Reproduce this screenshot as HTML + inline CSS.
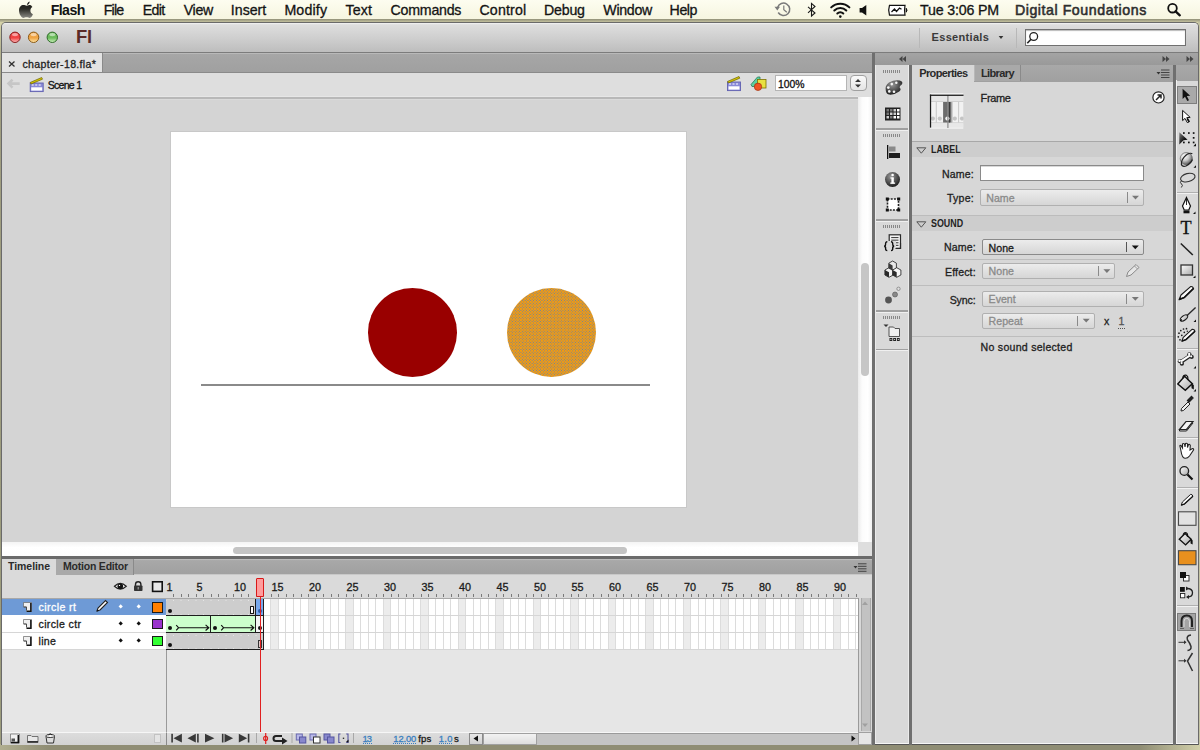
<!DOCTYPE html>
<html><head><meta charset="utf-8">
<style>
*{margin:0;padding:0;box-sizing:border-box}
html,body{width:1200px;height:750px;overflow:hidden;background:#c9c69f;font-family:"Liberation Sans",sans-serif;color:#111;position:relative}
.a{position:absolute}
.t{position:absolute;white-space:pre;line-height:0;height:0;-webkit-text-stroke-width:0.3px}
.t .bl{display:inline-block;line-height:0}
svg{position:absolute;overflow:visible}
</style></head><body>
<div class="a" style="left:0px;top:0px;width:1200px;height:750px;background:#d6d3aa"></div><div class="a" style="left:0px;top:19px;width:1.5px;height:726px;background:linear-gradient(#dad7ac,#b8b692 4%,#a09e80 10%,#9c9c7c)"></div><div class="a" style="left:1198px;top:19px;width:2px;height:726px;background:#c4c3a2"></div><div class="a" style="left:0px;top:744px;width:1200px;height:6px;background:linear-gradient(90deg,#b0ae90,#8f8d74 4%,#8f8d74 95%,#d2d0aa)"></div><div class="a" style="left:0px;top:0px;width:1200px;height:19px;background:linear-gradient(#fdfdf0,#f6f5e0)"></div><div class="a" style="left:0px;top:19px;width:1200px;height:3px;background:linear-gradient(#8f8e76,#c4c19f)"></div><div class="t" style="left:50.8px;top:10.0px;font-size:14.2px;font-weight:bold;color:#141414;letter-spacing:-0.64px;-webkit-text-stroke-width:0;"><span class="bl">Flash</span></div><div class="t" style="left:103.7px;top:10.0px;font-size:14.2px;font-weight:normal;color:#141414;letter-spacing:-0.79px;"><span class="bl">File</span></div><div class="t" style="left:142.8px;top:10.0px;font-size:14.2px;font-weight:normal;color:#141414;letter-spacing:-0.65px;"><span class="bl">Edit</span></div><div class="t" style="left:183.7px;top:10.0px;font-size:14.2px;font-weight:normal;color:#141414;letter-spacing:-0.30px;"><span class="bl">View</span></div><div class="t" style="left:230.8px;top:10.0px;font-size:14.2px;font-weight:normal;color:#141414;letter-spacing:0.00px;"><span class="bl">Insert</span></div><div class="t" style="left:284.4px;top:10.0px;font-size:14.2px;font-weight:normal;color:#141414;letter-spacing:0.16px;"><span class="bl">Modify</span></div><div class="t" style="left:345.4px;top:10.0px;font-size:14.2px;font-weight:normal;color:#141414;letter-spacing:0.16px;"><span class="bl">Text</span></div><div class="t" style="left:390.6px;top:10.0px;font-size:14.2px;font-weight:normal;color:#141414;letter-spacing:-0.24px;"><span class="bl">Commands</span></div><div class="t" style="left:479.4px;top:10.0px;font-size:14.2px;font-weight:normal;color:#141414;letter-spacing:0.19px;"><span class="bl">Control</span></div><div class="t" style="left:544.0px;top:10.0px;font-size:14.2px;font-weight:normal;color:#141414;letter-spacing:-0.20px;"><span class="bl">Debug</span></div><div class="t" style="left:603.3px;top:10.0px;font-size:14.2px;font-weight:normal;color:#141414;letter-spacing:-0.29px;"><span class="bl">Window</span></div><div class="t" style="left:669.6px;top:10.0px;font-size:14.2px;font-weight:normal;color:#141414;letter-spacing:-0.43px;"><span class="bl">Help</span></div><div class="t" style="left:920.0px;top:10.0px;font-size:14.2px;font-weight:normal;color:#141414;letter-spacing:-0.17px;"><span class="bl">Tue 3:06 PM</span></div><div class="t" style="left:1014.9px;top:10.0px;font-size:14.2px;font-weight:normal;color:#2e2e2e;letter-spacing:0.55px;-webkit-text-stroke-width:0.55px"><span class="bl">Digital Foundations</span></div><div class="a" style="left:1px;top:22px;width:1198px;height:723px;background:#d6d6d6;border:1px solid #6a6a6a;border-bottom-color:#555;border-radius:5px 5px 0 0"></div><div class="a" style="left:2px;top:23px;width:1196px;height:30px;background:linear-gradient(#f4f4f4,#dedede 6%,#cdcdcd 55%,#bcbcbc);border-radius:4px 4px 0 0"></div><div class="a" style="left:2px;top:52px;width:1196px;height:1px;background:#7c7c7c"></div><div class="t" style="left:75.8px;top:36.7px;font-size:19px;font-weight:bold;color:#5b2b27;letter-spacing:0.00px;-webkit-text-stroke-width:0;transform:scaleX(0.97);transform-origin:0 0;letter-spacing:-0.3px"><span class="bl">Fl</span></div><svg style="left:0;top:0" width="1" height="1"><defs><linearGradient id="tl0" x1="0" y1="0" x2="0" y2="1"><stop offset="0" stop-color="#f04444"/><stop offset="0.55" stop-color="#f04444"/><stop offset="1" stop-color="#ffc0c0"/></linearGradient><linearGradient id="tl1" x1="0" y1="0" x2="0" y2="1"><stop offset="0" stop-color="#f0a444"/><stop offset="0.55" stop-color="#f0a444"/><stop offset="1" stop-color="#ffe8a8"/></linearGradient><linearGradient id="tl2" x1="0" y1="0" x2="0" y2="1"><stop offset="0" stop-color="#6cbc5c"/><stop offset="0.55" stop-color="#6cbc5c"/><stop offset="1" stop-color="#d0f4c0"/></linearGradient></defs><circle cx="15" cy="37.3" r="5.2" fill="url(#tl0)" stroke="#8a2020" stroke-width="1"/><ellipse cx="15" cy="34.6" rx="3" ry="1.6" fill="#fff" opacity="0.5"/><circle cx="33.6" cy="37.3" r="5.2" fill="url(#tl1)" stroke="#8a5a18" stroke-width="1"/><ellipse cx="33.6" cy="34.6" rx="3" ry="1.6" fill="#fff" opacity="0.5"/><circle cx="52.3" cy="37.3" r="5.2" fill="url(#tl2)" stroke="#2e6a28" stroke-width="1"/><ellipse cx="52.3" cy="34.6" rx="3" ry="1.6" fill="#fff" opacity="0.5"/></svg><div class="a" style="left:919px;top:28px;width:1px;height:20px;background:#b8b8b8"></div><div class="t" style="left:931.6px;top:36.8px;font-size:11px;font-weight:bold;color:#3a3a3a;letter-spacing:0.31px;-webkit-text-stroke-width:0;"><span class="bl">Essentials</span></div><div class="a" style="left:1016px;top:28px;width:1px;height:20px;background:#b8b8b8"></div><div class="a" style="left:1025px;top:29px;width:161px;height:17px;background:#fff;border:1px solid #707070;box-shadow:inset 0 1px 1px #bbb"></div><div class="a" style="left:2px;top:53px;width:870px;height:19px;background:linear-gradient(#c2c2c2,#a6a6a6 8%,#a0a0a0)"></div><div class="a" style="left:2px;top:53px;width:101px;height:19px;background:#e3e3e3;border-right:1px solid #8a8a8a"></div><div class="t" style="left:22.5px;top:63.7px;font-size:10.6px;font-weight:normal;color:#222;letter-spacing:0.32px;"><span class="bl">chapter-18.fla*</span></div><div class="a" style="left:2px;top:71.6px;width:870px;height:1.2px;background:#8a8a8a"></div><div class="a" style="left:2px;top:72.8px;width:870px;height:24.2px;background:#dedede"></div><div class="t" style="left:47.7px;top:84.8px;font-size:10.6px;font-weight:normal;color:#111;letter-spacing:-0.75px;"><span class="bl">Scene 1</span></div><div class="a" style="left:775px;top:75px;width:72px;height:16px;background:#fff;border:1px solid #b5b5b5"></div><div class="t" style="left:778.0px;top:84.7px;font-size:10.4px;font-weight:normal;color:#111;letter-spacing:0.00px;"><span class="bl">100%</span></div><div class="a" style="left:849.5px;top:75px;width:17px;height:16px;background:linear-gradient(#fafafa,#e4e4e4);border:1px solid #a0a0a0;border-radius:4px"></div><div class="a" style="left:2px;top:97px;width:856px;height:445px;background:#d4d4d4"></div><div class="a" style="left:2px;top:96px;width:856px;height:1px;background:#e6e6e6"></div><div class="a" style="left:2px;top:97px;width:856px;height:1.8px;background:#b8b8b8"></div><div class="a" style="left:2px;top:98.8px;width:856px;height:1.2px;background:#dadada"></div><div class="a" style="left:170px;top:131px;width:517px;height:377px;background:#c8c8c8"></div><div class="a" style="left:171px;top:132px;width:515px;height:375px;background:#fff"></div><div class="a" style="left:858px;top:97px;width:14px;height:445px;background:linear-gradient(90deg,#ececec,#fcfcfc 30%,#ffffff 70%,#f2f2f2)"></div><div class="a" style="left:861.4px;top:263px;width:7.5px;height:113px;background:#c6c6c6;border-radius:4px"></div><div class="a" style="left:2px;top:541.7px;width:856px;height:14.3px;background:linear-gradient(#f4f4f4,#ffffff 40%,#fdfdfd)"></div><div class="a" style="left:233.3px;top:546.7px;width:394px;height:7px;background:#c4c4c4;border-radius:4px"></div><div class="a" style="left:858px;top:541.7px;width:14px;height:14.3px;background:#dedede"></div><div class="a" style="left:2px;top:556px;width:870px;height:3px;background:#6a6a6a"></div><div class="a" style="left:2px;top:559px;width:870px;height:16px;background:linear-gradient(#c4c4c4,#a8a8a8 10%,#a0a0a0)"></div><div class="a" style="left:2px;top:558.7px;width:54.2px;height:17px;background:#dadada"></div><div class="a" style="left:56.2px;top:559px;width:78.2px;height:15.5px;background:#a9a9a9;border-right:1px solid #8a8a8a"></div><div class="t" style="left:8.1px;top:566.1px;font-size:10.5px;font-weight:bold;color:#2a2a2a;letter-spacing:-0.07px;-webkit-text-stroke-width:0;"><span class="bl">Timeline</span></div><div class="t" style="left:63.1px;top:566.1px;font-size:10.5px;font-weight:bold;color:#2a2a2a;letter-spacing:-0.22px;-webkit-text-stroke-width:0;"><span class="bl">Motion Editor</span></div><div class="a" style="left:134.4px;top:574px;width:737.6px;height:1.5px;background:#c8c8c8"></div><div class="a" style="left:2px;top:575px;width:870px;height:23px;background:#dadada"></div><div class="a" style="left:2px;top:598px;width:856px;height:134px;background:#e6e6e6"></div><div class="a" style="left:166px;top:598px;width:1px;height:134px;background:#9a9a9a"></div><div class="a" style="left:858px;top:598px;width:14px;height:134px;background:#d8d8d8;border-left:1px solid #9a9a9a"></div><div class="a" style="left:860.5px;top:598px;width:10.8px;height:133px;background:#c2c2c2;border-left:1px solid #a8a8a8;border-right:1px solid #a8a8a8"></div><div class="a" style="left:2px;top:731.5px;width:856px;height:13px;background:#d9d9d9;border-top:1px solid #f4f4f4"></div><div class="a" style="left:858px;top:731.5px;width:14px;height:13px;background:#ececec"></div><div class="a" style="left:872px;top:53px;width:3px;height:692px;background:#6f6f6f"></div><div class="a" style="left:875px;top:53px;width:323px;height:12px;background:linear-gradient(#a4a4a4,#999)"></div><div class="a" style="left:875px;top:65px;width:34px;height:679px;background:#d9d9d9"></div><div class="a" style="left:909px;top:65px;width:3px;height:680px;background:#6f6f6f"></div><div class="a" style="left:912px;top:65px;width:261px;height:679px;background:#d7d7d7"></div><div class="a" style="left:912px;top:65px;width:261px;height:16.5px;background:linear-gradient(#a8a8a8,#a0a0a0)"></div><div class="a" style="left:912px;top:65px;width:62px;height:17px;background:#d7d7d7"></div><div class="a" style="left:974px;top:65px;width:46.5px;height:16px;background:#a9a9a9;border-right:1px solid #8a8a8a;border-left:1px solid #b8b8b8"></div><div class="t" style="left:919.2px;top:73.4px;font-size:11px;font-weight:bold;color:#2a2a2a;letter-spacing:-0.62px;-webkit-text-stroke-width:0;"><span class="bl">Properties</span></div><div class="t" style="left:981.0px;top:73.4px;font-size:11px;font-weight:bold;color:#2a2a2a;letter-spacing:-0.63px;-webkit-text-stroke-width:0;"><span class="bl">Library</span></div><div class="a" style="left:1173px;top:65px;width:2.6px;height:680px;background:#6f6f6f"></div><div class="a" style="left:1175.6px;top:65px;width:22.4px;height:679px;background:#d9d9d9"></div><div class="a" style="left:1175.6px;top:65px;width:22.4px;height:15.5px;background:linear-gradient(#a8a8a8,#a0a0a0)"></div><div class="a" style="left:367.6px;top:288px;width:89.2px;height:88.8px;border-radius:50%;background:#990000"></div><div class="a" style="left:507.3px;top:288px;width:88.7px;height:88.8px;border-radius:50%;background-color:#f59b0e;background-image:radial-gradient(circle,#5f82b0 0.5px,transparent 0.9px),radial-gradient(circle,#5f82b0 0.5px,transparent 0.9px);background-size:2.8px 2.8px;background-position:0 0,1.4px 1.4px"></div><div class="a" style="left:201.4px;top:384.2px;width:448.4px;height:1.5px;background:#8a8a8a"></div><div class="a" style="left:166.2px;top:598.5px;width:692px;height:50.8px;background:#fff"></div><div class="a" style="left:172.70px;top:598.5px;width:1px;height:50.8px;background:#dcdcdc"></div><div class="a" style="left:180.20px;top:598.5px;width:1px;height:50.8px;background:#dcdcdc"></div><div class="a" style="left:187.70px;top:598.5px;width:1px;height:50.8px;background:#dcdcdc"></div><div class="a" style="left:195.20px;top:598.5px;width:1px;height:50.8px;background:#dcdcdc"></div><div class="a" style="left:196.20px;top:598.5px;width:7.5px;height:50.8px;background:#ececec"></div><div class="a" style="left:202.70px;top:598.5px;width:1px;height:50.8px;background:#dcdcdc"></div><div class="a" style="left:210.20px;top:598.5px;width:1px;height:50.8px;background:#dcdcdc"></div><div class="a" style="left:217.70px;top:598.5px;width:1px;height:50.8px;background:#dcdcdc"></div><div class="a" style="left:225.20px;top:598.5px;width:1px;height:50.8px;background:#dcdcdc"></div><div class="a" style="left:232.70px;top:598.5px;width:1px;height:50.8px;background:#dcdcdc"></div><div class="a" style="left:233.70px;top:598.5px;width:7.5px;height:50.8px;background:#ececec"></div><div class="a" style="left:240.20px;top:598.5px;width:1px;height:50.8px;background:#dcdcdc"></div><div class="a" style="left:247.70px;top:598.5px;width:1px;height:50.8px;background:#dcdcdc"></div><div class="a" style="left:255.20px;top:598.5px;width:1px;height:50.8px;background:#dcdcdc"></div><div class="a" style="left:262.70px;top:598.5px;width:1px;height:50.8px;background:#dcdcdc"></div><div class="a" style="left:270.20px;top:598.5px;width:1px;height:50.8px;background:#dcdcdc"></div><div class="a" style="left:271.20px;top:598.5px;width:7.5px;height:50.8px;background:#ececec"></div><div class="a" style="left:277.70px;top:598.5px;width:1px;height:50.8px;background:#dcdcdc"></div><div class="a" style="left:285.20px;top:598.5px;width:1px;height:50.8px;background:#dcdcdc"></div><div class="a" style="left:292.70px;top:598.5px;width:1px;height:50.8px;background:#dcdcdc"></div><div class="a" style="left:300.20px;top:598.5px;width:1px;height:50.8px;background:#dcdcdc"></div><div class="a" style="left:307.70px;top:598.5px;width:1px;height:50.8px;background:#dcdcdc"></div><div class="a" style="left:308.70px;top:598.5px;width:7.5px;height:50.8px;background:#ececec"></div><div class="a" style="left:315.20px;top:598.5px;width:1px;height:50.8px;background:#dcdcdc"></div><div class="a" style="left:322.70px;top:598.5px;width:1px;height:50.8px;background:#dcdcdc"></div><div class="a" style="left:330.20px;top:598.5px;width:1px;height:50.8px;background:#dcdcdc"></div><div class="a" style="left:337.70px;top:598.5px;width:1px;height:50.8px;background:#dcdcdc"></div><div class="a" style="left:345.20px;top:598.5px;width:1px;height:50.8px;background:#dcdcdc"></div><div class="a" style="left:346.20px;top:598.5px;width:7.5px;height:50.8px;background:#ececec"></div><div class="a" style="left:352.70px;top:598.5px;width:1px;height:50.8px;background:#dcdcdc"></div><div class="a" style="left:360.20px;top:598.5px;width:1px;height:50.8px;background:#dcdcdc"></div><div class="a" style="left:367.70px;top:598.5px;width:1px;height:50.8px;background:#dcdcdc"></div><div class="a" style="left:375.20px;top:598.5px;width:1px;height:50.8px;background:#dcdcdc"></div><div class="a" style="left:382.70px;top:598.5px;width:1px;height:50.8px;background:#dcdcdc"></div><div class="a" style="left:383.70px;top:598.5px;width:7.5px;height:50.8px;background:#ececec"></div><div class="a" style="left:390.20px;top:598.5px;width:1px;height:50.8px;background:#dcdcdc"></div><div class="a" style="left:397.70px;top:598.5px;width:1px;height:50.8px;background:#dcdcdc"></div><div class="a" style="left:405.20px;top:598.5px;width:1px;height:50.8px;background:#dcdcdc"></div><div class="a" style="left:412.70px;top:598.5px;width:1px;height:50.8px;background:#dcdcdc"></div><div class="a" style="left:420.20px;top:598.5px;width:1px;height:50.8px;background:#dcdcdc"></div><div class="a" style="left:421.20px;top:598.5px;width:7.5px;height:50.8px;background:#ececec"></div><div class="a" style="left:427.70px;top:598.5px;width:1px;height:50.8px;background:#dcdcdc"></div><div class="a" style="left:435.20px;top:598.5px;width:1px;height:50.8px;background:#dcdcdc"></div><div class="a" style="left:442.70px;top:598.5px;width:1px;height:50.8px;background:#dcdcdc"></div><div class="a" style="left:450.20px;top:598.5px;width:1px;height:50.8px;background:#dcdcdc"></div><div class="a" style="left:457.70px;top:598.5px;width:1px;height:50.8px;background:#dcdcdc"></div><div class="a" style="left:458.70px;top:598.5px;width:7.5px;height:50.8px;background:#ececec"></div><div class="a" style="left:465.20px;top:598.5px;width:1px;height:50.8px;background:#dcdcdc"></div><div class="a" style="left:472.70px;top:598.5px;width:1px;height:50.8px;background:#dcdcdc"></div><div class="a" style="left:480.20px;top:598.5px;width:1px;height:50.8px;background:#dcdcdc"></div><div class="a" style="left:487.70px;top:598.5px;width:1px;height:50.8px;background:#dcdcdc"></div><div class="a" style="left:495.20px;top:598.5px;width:1px;height:50.8px;background:#dcdcdc"></div><div class="a" style="left:496.20px;top:598.5px;width:7.5px;height:50.8px;background:#ececec"></div><div class="a" style="left:502.70px;top:598.5px;width:1px;height:50.8px;background:#dcdcdc"></div><div class="a" style="left:510.20px;top:598.5px;width:1px;height:50.8px;background:#dcdcdc"></div><div class="a" style="left:517.70px;top:598.5px;width:1px;height:50.8px;background:#dcdcdc"></div><div class="a" style="left:525.20px;top:598.5px;width:1px;height:50.8px;background:#dcdcdc"></div><div class="a" style="left:532.70px;top:598.5px;width:1px;height:50.8px;background:#dcdcdc"></div><div class="a" style="left:533.70px;top:598.5px;width:7.5px;height:50.8px;background:#ececec"></div><div class="a" style="left:540.20px;top:598.5px;width:1px;height:50.8px;background:#dcdcdc"></div><div class="a" style="left:547.70px;top:598.5px;width:1px;height:50.8px;background:#dcdcdc"></div><div class="a" style="left:555.20px;top:598.5px;width:1px;height:50.8px;background:#dcdcdc"></div><div class="a" style="left:562.70px;top:598.5px;width:1px;height:50.8px;background:#dcdcdc"></div><div class="a" style="left:570.20px;top:598.5px;width:1px;height:50.8px;background:#dcdcdc"></div><div class="a" style="left:571.20px;top:598.5px;width:7.5px;height:50.8px;background:#ececec"></div><div class="a" style="left:577.70px;top:598.5px;width:1px;height:50.8px;background:#dcdcdc"></div><div class="a" style="left:585.20px;top:598.5px;width:1px;height:50.8px;background:#dcdcdc"></div><div class="a" style="left:592.70px;top:598.5px;width:1px;height:50.8px;background:#dcdcdc"></div><div class="a" style="left:600.20px;top:598.5px;width:1px;height:50.8px;background:#dcdcdc"></div><div class="a" style="left:607.70px;top:598.5px;width:1px;height:50.8px;background:#dcdcdc"></div><div class="a" style="left:608.70px;top:598.5px;width:7.5px;height:50.8px;background:#ececec"></div><div class="a" style="left:615.20px;top:598.5px;width:1px;height:50.8px;background:#dcdcdc"></div><div class="a" style="left:622.70px;top:598.5px;width:1px;height:50.8px;background:#dcdcdc"></div><div class="a" style="left:630.20px;top:598.5px;width:1px;height:50.8px;background:#dcdcdc"></div><div class="a" style="left:637.70px;top:598.5px;width:1px;height:50.8px;background:#dcdcdc"></div><div class="a" style="left:645.20px;top:598.5px;width:1px;height:50.8px;background:#dcdcdc"></div><div class="a" style="left:646.20px;top:598.5px;width:7.5px;height:50.8px;background:#ececec"></div><div class="a" style="left:652.70px;top:598.5px;width:1px;height:50.8px;background:#dcdcdc"></div><div class="a" style="left:660.20px;top:598.5px;width:1px;height:50.8px;background:#dcdcdc"></div><div class="a" style="left:667.70px;top:598.5px;width:1px;height:50.8px;background:#dcdcdc"></div><div class="a" style="left:675.20px;top:598.5px;width:1px;height:50.8px;background:#dcdcdc"></div><div class="a" style="left:682.70px;top:598.5px;width:1px;height:50.8px;background:#dcdcdc"></div><div class="a" style="left:683.70px;top:598.5px;width:7.5px;height:50.8px;background:#ececec"></div><div class="a" style="left:690.20px;top:598.5px;width:1px;height:50.8px;background:#dcdcdc"></div><div class="a" style="left:697.70px;top:598.5px;width:1px;height:50.8px;background:#dcdcdc"></div><div class="a" style="left:705.20px;top:598.5px;width:1px;height:50.8px;background:#dcdcdc"></div><div class="a" style="left:712.70px;top:598.5px;width:1px;height:50.8px;background:#dcdcdc"></div><div class="a" style="left:720.20px;top:598.5px;width:1px;height:50.8px;background:#dcdcdc"></div><div class="a" style="left:721.20px;top:598.5px;width:7.5px;height:50.8px;background:#ececec"></div><div class="a" style="left:727.70px;top:598.5px;width:1px;height:50.8px;background:#dcdcdc"></div><div class="a" style="left:735.20px;top:598.5px;width:1px;height:50.8px;background:#dcdcdc"></div><div class="a" style="left:742.70px;top:598.5px;width:1px;height:50.8px;background:#dcdcdc"></div><div class="a" style="left:750.20px;top:598.5px;width:1px;height:50.8px;background:#dcdcdc"></div><div class="a" style="left:757.70px;top:598.5px;width:1px;height:50.8px;background:#dcdcdc"></div><div class="a" style="left:758.70px;top:598.5px;width:7.5px;height:50.8px;background:#ececec"></div><div class="a" style="left:765.20px;top:598.5px;width:1px;height:50.8px;background:#dcdcdc"></div><div class="a" style="left:772.70px;top:598.5px;width:1px;height:50.8px;background:#dcdcdc"></div><div class="a" style="left:780.20px;top:598.5px;width:1px;height:50.8px;background:#dcdcdc"></div><div class="a" style="left:787.70px;top:598.5px;width:1px;height:50.8px;background:#dcdcdc"></div><div class="a" style="left:795.20px;top:598.5px;width:1px;height:50.8px;background:#dcdcdc"></div><div class="a" style="left:796.20px;top:598.5px;width:7.5px;height:50.8px;background:#ececec"></div><div class="a" style="left:802.70px;top:598.5px;width:1px;height:50.8px;background:#dcdcdc"></div><div class="a" style="left:810.20px;top:598.5px;width:1px;height:50.8px;background:#dcdcdc"></div><div class="a" style="left:817.70px;top:598.5px;width:1px;height:50.8px;background:#dcdcdc"></div><div class="a" style="left:825.20px;top:598.5px;width:1px;height:50.8px;background:#dcdcdc"></div><div class="a" style="left:832.70px;top:598.5px;width:1px;height:50.8px;background:#dcdcdc"></div><div class="a" style="left:833.70px;top:598.5px;width:7.5px;height:50.8px;background:#ececec"></div><div class="a" style="left:840.20px;top:598.5px;width:1px;height:50.8px;background:#dcdcdc"></div><div class="a" style="left:847.70px;top:598.5px;width:1px;height:50.8px;background:#dcdcdc"></div><div class="a" style="left:855.20px;top:598.5px;width:1px;height:50.8px;background:#dcdcdc"></div><div class="a" style="left:166.2px;top:614.6px;width:692px;height:1px;background:#d6d6d6"></div><div class="a" style="left:166.2px;top:631.6px;width:692px;height:1px;background:#d6d6d6"></div><div class="a" style="left:166.2px;top:648.5px;width:692px;height:1px;background:#d6d6d6"></div><div class="a" style="left:2px;top:597.5px;width:856px;height:1px;background:#a8a8a8"></div><div class="a" style="left:173.10px;top:594px;width:1.2px;height:3px;background:#7a7a7a"></div><div class="a" style="left:180.60px;top:594px;width:1.2px;height:3px;background:#7a7a7a"></div><div class="a" style="left:188.10px;top:594px;width:1.2px;height:3px;background:#7a7a7a"></div><div class="a" style="left:195.60px;top:594px;width:1.2px;height:3px;background:#7a7a7a"></div><div class="a" style="left:203.10px;top:594px;width:1.2px;height:3px;background:#7a7a7a"></div><div class="a" style="left:210.60px;top:594px;width:1.2px;height:3px;background:#7a7a7a"></div><div class="a" style="left:218.10px;top:594px;width:1.2px;height:3px;background:#7a7a7a"></div><div class="a" style="left:225.60px;top:594px;width:1.2px;height:3px;background:#7a7a7a"></div><div class="a" style="left:233.10px;top:594px;width:1.2px;height:3px;background:#7a7a7a"></div><div class="a" style="left:240.60px;top:594px;width:1.2px;height:3px;background:#7a7a7a"></div><div class="a" style="left:248.10px;top:594px;width:1.2px;height:3px;background:#7a7a7a"></div><div class="a" style="left:255.60px;top:594px;width:1.2px;height:3px;background:#7a7a7a"></div><div class="a" style="left:263.10px;top:594px;width:1.2px;height:3px;background:#7a7a7a"></div><div class="a" style="left:270.60px;top:594px;width:1.2px;height:3px;background:#7a7a7a"></div><div class="a" style="left:278.10px;top:594px;width:1.2px;height:3px;background:#7a7a7a"></div><div class="a" style="left:285.60px;top:594px;width:1.2px;height:3px;background:#7a7a7a"></div><div class="a" style="left:293.10px;top:594px;width:1.2px;height:3px;background:#7a7a7a"></div><div class="a" style="left:300.60px;top:594px;width:1.2px;height:3px;background:#7a7a7a"></div><div class="a" style="left:308.10px;top:594px;width:1.2px;height:3px;background:#7a7a7a"></div><div class="a" style="left:315.60px;top:594px;width:1.2px;height:3px;background:#7a7a7a"></div><div class="a" style="left:323.10px;top:594px;width:1.2px;height:3px;background:#7a7a7a"></div><div class="a" style="left:330.60px;top:594px;width:1.2px;height:3px;background:#7a7a7a"></div><div class="a" style="left:338.10px;top:594px;width:1.2px;height:3px;background:#7a7a7a"></div><div class="a" style="left:345.60px;top:594px;width:1.2px;height:3px;background:#7a7a7a"></div><div class="a" style="left:353.10px;top:594px;width:1.2px;height:3px;background:#7a7a7a"></div><div class="a" style="left:360.60px;top:594px;width:1.2px;height:3px;background:#7a7a7a"></div><div class="a" style="left:368.10px;top:594px;width:1.2px;height:3px;background:#7a7a7a"></div><div class="a" style="left:375.60px;top:594px;width:1.2px;height:3px;background:#7a7a7a"></div><div class="a" style="left:383.10px;top:594px;width:1.2px;height:3px;background:#7a7a7a"></div><div class="a" style="left:390.60px;top:594px;width:1.2px;height:3px;background:#7a7a7a"></div><div class="a" style="left:398.10px;top:594px;width:1.2px;height:3px;background:#7a7a7a"></div><div class="a" style="left:405.60px;top:594px;width:1.2px;height:3px;background:#7a7a7a"></div><div class="a" style="left:413.10px;top:594px;width:1.2px;height:3px;background:#7a7a7a"></div><div class="a" style="left:420.60px;top:594px;width:1.2px;height:3px;background:#7a7a7a"></div><div class="a" style="left:428.10px;top:594px;width:1.2px;height:3px;background:#7a7a7a"></div><div class="a" style="left:435.60px;top:594px;width:1.2px;height:3px;background:#7a7a7a"></div><div class="a" style="left:443.10px;top:594px;width:1.2px;height:3px;background:#7a7a7a"></div><div class="a" style="left:450.60px;top:594px;width:1.2px;height:3px;background:#7a7a7a"></div><div class="a" style="left:458.10px;top:594px;width:1.2px;height:3px;background:#7a7a7a"></div><div class="a" style="left:465.60px;top:594px;width:1.2px;height:3px;background:#7a7a7a"></div><div class="a" style="left:473.10px;top:594px;width:1.2px;height:3px;background:#7a7a7a"></div><div class="a" style="left:480.60px;top:594px;width:1.2px;height:3px;background:#7a7a7a"></div><div class="a" style="left:488.10px;top:594px;width:1.2px;height:3px;background:#7a7a7a"></div><div class="a" style="left:495.60px;top:594px;width:1.2px;height:3px;background:#7a7a7a"></div><div class="a" style="left:503.10px;top:594px;width:1.2px;height:3px;background:#7a7a7a"></div><div class="a" style="left:510.60px;top:594px;width:1.2px;height:3px;background:#7a7a7a"></div><div class="a" style="left:518.10px;top:594px;width:1.2px;height:3px;background:#7a7a7a"></div><div class="a" style="left:525.60px;top:594px;width:1.2px;height:3px;background:#7a7a7a"></div><div class="a" style="left:533.10px;top:594px;width:1.2px;height:3px;background:#7a7a7a"></div><div class="a" style="left:540.60px;top:594px;width:1.2px;height:3px;background:#7a7a7a"></div><div class="a" style="left:548.10px;top:594px;width:1.2px;height:3px;background:#7a7a7a"></div><div class="a" style="left:555.60px;top:594px;width:1.2px;height:3px;background:#7a7a7a"></div><div class="a" style="left:563.10px;top:594px;width:1.2px;height:3px;background:#7a7a7a"></div><div class="a" style="left:570.60px;top:594px;width:1.2px;height:3px;background:#7a7a7a"></div><div class="a" style="left:578.10px;top:594px;width:1.2px;height:3px;background:#7a7a7a"></div><div class="a" style="left:585.60px;top:594px;width:1.2px;height:3px;background:#7a7a7a"></div><div class="a" style="left:593.10px;top:594px;width:1.2px;height:3px;background:#7a7a7a"></div><div class="a" style="left:600.60px;top:594px;width:1.2px;height:3px;background:#7a7a7a"></div><div class="a" style="left:608.10px;top:594px;width:1.2px;height:3px;background:#7a7a7a"></div><div class="a" style="left:615.60px;top:594px;width:1.2px;height:3px;background:#7a7a7a"></div><div class="a" style="left:623.10px;top:594px;width:1.2px;height:3px;background:#7a7a7a"></div><div class="a" style="left:630.60px;top:594px;width:1.2px;height:3px;background:#7a7a7a"></div><div class="a" style="left:638.10px;top:594px;width:1.2px;height:3px;background:#7a7a7a"></div><div class="a" style="left:645.60px;top:594px;width:1.2px;height:3px;background:#7a7a7a"></div><div class="a" style="left:653.10px;top:594px;width:1.2px;height:3px;background:#7a7a7a"></div><div class="a" style="left:660.60px;top:594px;width:1.2px;height:3px;background:#7a7a7a"></div><div class="a" style="left:668.10px;top:594px;width:1.2px;height:3px;background:#7a7a7a"></div><div class="a" style="left:675.60px;top:594px;width:1.2px;height:3px;background:#7a7a7a"></div><div class="a" style="left:683.10px;top:594px;width:1.2px;height:3px;background:#7a7a7a"></div><div class="a" style="left:690.60px;top:594px;width:1.2px;height:3px;background:#7a7a7a"></div><div class="a" style="left:698.10px;top:594px;width:1.2px;height:3px;background:#7a7a7a"></div><div class="a" style="left:705.60px;top:594px;width:1.2px;height:3px;background:#7a7a7a"></div><div class="a" style="left:713.10px;top:594px;width:1.2px;height:3px;background:#7a7a7a"></div><div class="a" style="left:720.60px;top:594px;width:1.2px;height:3px;background:#7a7a7a"></div><div class="a" style="left:728.10px;top:594px;width:1.2px;height:3px;background:#7a7a7a"></div><div class="a" style="left:735.60px;top:594px;width:1.2px;height:3px;background:#7a7a7a"></div><div class="a" style="left:743.10px;top:594px;width:1.2px;height:3px;background:#7a7a7a"></div><div class="a" style="left:750.60px;top:594px;width:1.2px;height:3px;background:#7a7a7a"></div><div class="a" style="left:758.10px;top:594px;width:1.2px;height:3px;background:#7a7a7a"></div><div class="a" style="left:765.60px;top:594px;width:1.2px;height:3px;background:#7a7a7a"></div><div class="a" style="left:773.10px;top:594px;width:1.2px;height:3px;background:#7a7a7a"></div><div class="a" style="left:780.60px;top:594px;width:1.2px;height:3px;background:#7a7a7a"></div><div class="a" style="left:788.10px;top:594px;width:1.2px;height:3px;background:#7a7a7a"></div><div class="a" style="left:795.60px;top:594px;width:1.2px;height:3px;background:#7a7a7a"></div><div class="a" style="left:803.10px;top:594px;width:1.2px;height:3px;background:#7a7a7a"></div><div class="a" style="left:810.60px;top:594px;width:1.2px;height:3px;background:#7a7a7a"></div><div class="a" style="left:818.10px;top:594px;width:1.2px;height:3px;background:#7a7a7a"></div><div class="a" style="left:825.60px;top:594px;width:1.2px;height:3px;background:#7a7a7a"></div><div class="a" style="left:833.10px;top:594px;width:1.2px;height:3px;background:#7a7a7a"></div><div class="a" style="left:840.60px;top:594px;width:1.2px;height:3px;background:#7a7a7a"></div><div class="a" style="left:848.10px;top:594px;width:1.2px;height:3px;background:#7a7a7a"></div><div class="a" style="left:855.60px;top:594px;width:1.2px;height:3px;background:#7a7a7a"></div><div class="t" style="left:166.5px;top:587.1px;font-size:10.8px;font-weight:normal;color:#1a1a1a;letter-spacing:0.00px;"><span class="bl">1</span></div><div class="t" style="left:196.5px;top:587.1px;font-size:10.8px;font-weight:normal;color:#1a1a1a;letter-spacing:0.00px;"><span class="bl">5</span></div><div class="t" style="left:234.0px;top:587.1px;font-size:10.8px;font-weight:normal;color:#1a1a1a;letter-spacing:0.00px;"><span class="bl">10</span></div><div class="t" style="left:271.5px;top:587.1px;font-size:10.8px;font-weight:normal;color:#1a1a1a;letter-spacing:0.00px;"><span class="bl">15</span></div><div class="t" style="left:309.0px;top:587.1px;font-size:10.8px;font-weight:normal;color:#1a1a1a;letter-spacing:0.00px;"><span class="bl">20</span></div><div class="t" style="left:346.5px;top:587.1px;font-size:10.8px;font-weight:normal;color:#1a1a1a;letter-spacing:0.00px;"><span class="bl">25</span></div><div class="t" style="left:384.0px;top:587.1px;font-size:10.8px;font-weight:normal;color:#1a1a1a;letter-spacing:0.00px;"><span class="bl">30</span></div><div class="t" style="left:421.5px;top:587.1px;font-size:10.8px;font-weight:normal;color:#1a1a1a;letter-spacing:0.00px;"><span class="bl">35</span></div><div class="t" style="left:459.0px;top:587.1px;font-size:10.8px;font-weight:normal;color:#1a1a1a;letter-spacing:0.00px;"><span class="bl">40</span></div><div class="t" style="left:496.5px;top:587.1px;font-size:10.8px;font-weight:normal;color:#1a1a1a;letter-spacing:0.00px;"><span class="bl">45</span></div><div class="t" style="left:534.0px;top:587.1px;font-size:10.8px;font-weight:normal;color:#1a1a1a;letter-spacing:0.00px;"><span class="bl">50</span></div><div class="t" style="left:571.5px;top:587.1px;font-size:10.8px;font-weight:normal;color:#1a1a1a;letter-spacing:0.00px;"><span class="bl">55</span></div><div class="t" style="left:609.0px;top:587.1px;font-size:10.8px;font-weight:normal;color:#1a1a1a;letter-spacing:0.00px;"><span class="bl">60</span></div><div class="t" style="left:646.5px;top:587.1px;font-size:10.8px;font-weight:normal;color:#1a1a1a;letter-spacing:0.00px;"><span class="bl">65</span></div><div class="t" style="left:684.0px;top:587.1px;font-size:10.8px;font-weight:normal;color:#1a1a1a;letter-spacing:0.00px;"><span class="bl">70</span></div><div class="t" style="left:721.5px;top:587.1px;font-size:10.8px;font-weight:normal;color:#1a1a1a;letter-spacing:0.00px;"><span class="bl">75</span></div><div class="t" style="left:759.0px;top:587.1px;font-size:10.8px;font-weight:normal;color:#1a1a1a;letter-spacing:0.00px;"><span class="bl">80</span></div><div class="t" style="left:796.5px;top:587.1px;font-size:10.8px;font-weight:normal;color:#1a1a1a;letter-spacing:0.00px;"><span class="bl">85</span></div><div class="t" style="left:834.0px;top:587.1px;font-size:10.8px;font-weight:normal;color:#1a1a1a;letter-spacing:0.00px;"><span class="bl">90</span></div><div class="a" style="left:2px;top:598.5px;width:164px;height:16.9px;background:#6e9ad6"></div><div class="a" style="left:2px;top:615.4px;width:164px;height:17px;background:#fff"></div><div class="a" style="left:2px;top:632.4px;width:164px;height:16.9px;background:#fff"></div><div class="a" style="left:2px;top:631.6px;width:164px;height:1px;background:#d6d6d6"></div><div class="a" style="left:2px;top:648.5px;width:164px;height:1px;background:#d6d6d6"></div><div class="t" style="left:38.5px;top:606.8px;font-size:10.6px;font-weight:normal;color:#fff;letter-spacing:0.42px;"><span class="bl">circle rt</span></div><div class="t" style="left:38.5px;top:623.7px;font-size:10.6px;font-weight:normal;color:#1a1a1a;letter-spacing:0.34px;"><span class="bl">circle ctr</span></div><div class="t" style="left:38.5px;top:640.7px;font-size:10.6px;font-weight:normal;color:#1a1a1a;letter-spacing:0.33px;"><span class="bl">line</span></div><div class="a" style="left:152px;top:602.0px;width:10.5px;height:10.5px;background:#ff7f00;border:1.3px solid #1a1a1a"></div><div class="a" style="left:119.3px;top:605.3px;width:3.4px;height:3.4px;background:#fff;transform:rotate(45deg)"></div><div class="a" style="left:137.3px;top:605.3px;width:3.4px;height:3.4px;background:#fff;transform:rotate(45deg)"></div><div class="a" style="left:152px;top:618.9px;width:10.5px;height:10.5px;background:#9933cc;border:1.3px solid #1a1a1a"></div><div class="a" style="left:119.3px;top:622.1999999999999px;width:3.4px;height:3.4px;background:#111;transform:rotate(45deg)"></div><div class="a" style="left:137.3px;top:622.1999999999999px;width:3.4px;height:3.4px;background:#111;transform:rotate(45deg)"></div><div class="a" style="left:152px;top:635.9px;width:10.5px;height:10.5px;background:#33ff33;border:1.3px solid #1a1a1a"></div><div class="a" style="left:119.3px;top:639.1999999999999px;width:3.4px;height:3.4px;background:#111;transform:rotate(45deg)"></div><div class="a" style="left:137.3px;top:639.1999999999999px;width:3.4px;height:3.4px;background:#111;transform:rotate(45deg)"></div><div class="a" style="left:166.2px;top:599.2px;width:90.0px;height:16.899999999999977px;background:#cdcdcd;border-bottom:1.2px solid #1e1e1e;border-right:1.1px solid #1e1e1e"></div><div class="a" style="left:166.2px;top:616.1px;width:45.0px;height:17.0px;background:#ccffcc;border-bottom:1.2px solid #1e1e1e;border-right:1.1px solid #1e1e1e"></div><div class="a" style="left:211.2px;top:616.1px;width:45.0px;height:17.0px;background:#ccffcc;border-bottom:1.2px solid #1e1e1e;border-right:1.1px solid #1e1e1e"></div><div class="a" style="left:166.2px;top:633.1px;width:97.5px;height:16.899999999999977px;background:#cdcdcd;border-bottom:1.2px solid #1e1e1e;border-right:1.1px solid #1e1e1e"></div><div class="a" style="left:256.2px;top:599.2px;width:7.5px;height:16.899999999999977px;background:#78a8ec;border-right:1.1px solid #1e1e1e;border-bottom:1.2px solid #1e1e1e"></div><div class="a" style="left:256.2px;top:616.1px;width:7.5px;height:17.0px;background:#f2f4f4;border-right:1.1px solid #1e1e1e;border-bottom:1.2px solid #1e1e1e"></div><div class="a" style="left:166.2px;top:600.1px;width:88.5px;height:1.2px;background-image:linear-gradient(90deg,transparent 6.5px,#e6e6e6 6.5px);background-size:7.5px 1.2px;background-position:0.5px 0"></div><div class="a" style="left:166.2px;top:613.8px;width:88.5px;height:1.2px;background-image:linear-gradient(90deg,transparent 6.5px,#e6e6e6 6.5px);background-size:7.5px 1.2px;background-position:0.5px 0"></div><div class="a" style="left:166.2px;top:634.6px;width:96.0px;height:1.2px;background-image:linear-gradient(90deg,transparent 6.5px,#e6e6e6 6.5px);background-size:7.5px 1.2px;background-position:0.5px 0"></div><div class="a" style="left:166.2px;top:648.0999999999999px;width:96.0px;height:1.2px;background-image:linear-gradient(90deg,transparent 6.5px,#e6e6e6 6.5px);background-size:7.5px 1.2px;background-position:0.5px 0"></div><div class="a" style="left:167.64999999999998px;top:608.6px;width:4.6px;height:4.6px;background:#111;border-radius:50%"></div><div class="a" style="left:167.64999999999998px;top:625.5px;width:4.6px;height:4.6px;background:#111;border-radius:50%"></div><div class="a" style="left:212.64999999999998px;top:625.5px;width:4.6px;height:4.6px;background:#111;border-radius:50%"></div><div class="a" style="left:257.65px;top:625.5px;width:4.6px;height:4.6px;background:#111;border-radius:50%"></div><div class="a" style="left:167.64999999999998px;top:642.5px;width:4.6px;height:4.6px;background:#111;border-radius:50%"></div><div class="a" style="left:257.65px;top:608.6px;width:4.6px;height:4.6px;background:#2a5aa8;border-radius:50%"></div><div class="a" style="left:250.0px;top:605.7px;width:4.4px;height:8.2px;background:#fff;border:1.2px solid #111;border-radius:0.5px"></div><div class="a" style="left:257.5px;top:639.6px;width:4.6px;height:8.4px;background:#e0c8c8;border:1.2px solid #333"></div><svg style="left:0;top:0" width="1" height="1"><path d="M176.2 625.0999999999999 L178.6 627.6999999999999 L176.2 630.3 M178.39999999999998 627.6999999999999 L208.79999999999998 627.6999999999999 M205.6 624.9 L208.79999999999998 627.6999999999999 L205.6 630.4999999999999" stroke="#111" stroke-width="1.15" fill="none"/></svg><svg style="left:0;top:0" width="1" height="1"><path d="M221.2 625.0999999999999 L223.6 627.6999999999999 L221.2 630.3 M223.39999999999998 627.6999999999999 L253.79999999999998 627.6999999999999 M250.6 624.9 L253.79999999999998 627.6999999999999 L250.6 630.4999999999999" stroke="#111" stroke-width="1.15" fill="none"/></svg><div class="a" style="left:259.6px;top:593px;width:1.3px;height:139px;background:#e02020"></div><div class="a" style="left:256.2px;top:577.5px;width:7.8px;height:19px;background:#ff9c9c;border:1.2px solid #d81818;border-radius:1px"></div><div class="a" style="left:2px;top:731.5px;width:164px;height:13px;background:linear-gradient(#dcdcdc,#d2d2d2);border-top:1px solid #f6f6f6"></div><div class="a" style="left:166px;top:731.5px;width:692px;height:13px;background:linear-gradient(#dcdcdc,#d2d2d2);border-top:1px solid #f6f6f6;border-left:1px solid #8a8a8a"></div><div class="a" style="left:154.4px;top:734px;width:6.2px;height:9px;background:#e4e4e4;border:1px solid #c2c2c2"></div><svg style="left:0;top:0" width="1" height="1"><g fill="#383838">
<rect x="171.3" y="733.8" width="1.6" height="8.7"/><path d="M181.9 733.8 L173.5 738.15 L181.9 742.5Z"/>
<path d="M195.8 733.8 L187.5 738.15 L195.8 742.5Z"/><rect x="197.1" y="733.8" width="1.6" height="8.7"/>
<path d="M205 733.8 L214.4 738.15 L205 742.5Z"/>
<rect x="221.9" y="733.8" width="1.6" height="8.7"/><path d="M224.5 733.8 L233.1 738.15 L224.5 742.5Z"/>
<path d="M238.8 733.8 L247.2 738.15 L238.8 742.5Z"/><rect x="247.8" y="733.8" width="1.6" height="8.7"/>
</g>
<rect x="256" y="733" width="1" height="10" fill="#a8a8a8"/>
<rect x="265.1" y="733" width="1.2" height="11" fill="#e02020"/><circle cx="265.6" cy="738.4" r="2" fill="none" stroke="#e02020" stroke-width="1.1"/>
<path d="M282 736 L276 736 Q273.5 736 273.5 738.5 Q273.5 741 276 741 L283 741" fill="none" stroke="#222" stroke-width="2"/><path d="M282 737.5 L287.5 741 L282 744.5Z" fill="#222"/>
<rect x="291.5" y="733" width="1" height="10" fill="#a8a8a8"/>
<rect x="296.3" y="734" width="6" height="6" fill="#b8b8e8" stroke="#6a6ab0" stroke-width="1"/><rect x="299.5" y="737" width="6.3" height="6" fill="#8888cc" stroke="#5555a0" stroke-width="1"/>
<rect x="310" y="734" width="6" height="6" fill="#b8b8e8" stroke="#6a6ab0" stroke-width="1"/><rect x="313.5" y="737" width="6.5" height="6" fill="#fff" stroke="#333" stroke-width="1"/>
<rect x="324" y="734" width="6" height="6" fill="#8888cc" stroke="#5555a0" stroke-width="1"/><rect x="327.5" y="737" width="6.5" height="6" fill="#8888cc" stroke="#5555a0" stroke-width="1"/>
<path d="M340.5 734 L338.8 734 L338.8 742.5 L340.5 742.5 M346.2 734 L348 734 L348 742.5 L346.2 742.5" fill="none" stroke="#5555a0" stroke-width="1.1"/><rect x="342.8" y="737.6" width="1.4" height="1.4" fill="#333"/><path d="M346 742 L348.5 739.5 L348.5 742.5Z" fill="#111"/>
<rect x="353" y="733" width="1" height="10" fill="#a8a8a8"/>
</svg><div class="t" style="left:362.5px;top:738.7px;font-size:9.4px;font-weight:normal;color:#3a7fc0;letter-spacing:-0.94px;"><span class="bl">13</span></div><div class="t" style="left:393.3px;top:738.7px;font-size:9.4px;font-weight:normal;color:#3a7fc0;letter-spacing:-0.12px;"><span class="bl">12.00</span></div><div class="t" style="left:418.3px;top:738.7px;font-size:9.6px;font-weight:normal;color:#1a1a1a;letter-spacing:0.09px;"><span class="bl">fps</span></div><div class="t" style="left:438.8px;top:738.7px;font-size:9.4px;font-weight:normal;color:#3a7fc0;letter-spacing:0.33px;"><span class="bl">1.0</span></div><div class="t" style="left:454.0px;top:738.7px;font-size:9.6px;font-weight:normal;color:#1a1a1a;letter-spacing:0.00px;"><span class="bl">s</span></div><div class="a" style="left:362.5px;top:743px;width:9.5px;height:1px;background-image:linear-gradient(90deg,#3a7fc0 50%,transparent 50%);background-size:2px 1px"></div><div class="a" style="left:393.3px;top:743px;width:23.0px;height:1px;background-image:linear-gradient(90deg,#3a7fc0 50%,transparent 50%);background-size:2px 1px"></div><div class="a" style="left:438.8px;top:743px;width:13.699999999999989px;height:1px;background-image:linear-gradient(90deg,#3a7fc0 50%,transparent 50%);background-size:2px 1px"></div><div class="a" style="left:469px;top:732.5px;width:389px;height:12px;background:#c4c4c4;border-top:1px solid #9a9a9a"></div><div class="a" style="left:469px;top:732.5px;width:14.3px;height:12px;background:linear-gradient(#e8e8e8,#d0d0d0);border:1px solid #8a8a8a"></div><svg style="left:0;top:0" width="1" height="1"><path d="M473.5 738.5 L478 735.5 L478 741.5Z" fill="#111"/><path d="M855.5 738.5 L851.5 735.5 L851.5 741.5Z" fill="#111"/></svg><div class="a" style="left:483.3px;top:733px;width:54px;height:11.5px;background:linear-gradient(#f2f2f2,#dedede);border:1px solid #a0a0a0"></div><div class="a" style="left:858px;top:732px;width:14px;height:12.5px;background:#e6e6e6;border:1px solid #a0a0a0"></div><svg style="left:0;top:0" width="1" height="1"><path d="M862 723.5 L868 723.5 L865 727Z" fill="#a0a0a0"/><path d="M862 605 L868 605 L865 601.5Z" fill="#a0a0a0"/></svg><svg style="left:0;top:0" width="1" height="1">
<path d="M10.5 734 L19.5 734 L19.5 743 L10.5 743Z" fill="#f0f0f0" stroke="#777" stroke-width="0.8"/><path d="M18.3 735 L18.3 742.5 L11 742.5" fill="none" stroke="#111" stroke-width="1.5"/><rect x="11.5" y="738.5" width="3.5" height="3" fill="#555"/>
<path d="M27.5 735.5 L31 735.5 L32 736.5 L38 736.5 L38 742.5 L27.5 742.5Z" fill="#e8e8e8" stroke="#666" stroke-width="0.9"/><rect x="27.5" y="741" width="10.5" height="1.6" fill="#333"/>
<path d="M46 736.5 L54.5 736.5 L53.5 743 L47 743Z" fill="#ddd" stroke="#333" stroke-width="1"/><ellipse cx="50.2" cy="736" rx="4.5" ry="1.5" fill="#fff" stroke="#333" stroke-width="1"/><path d="M48.5 734.8 Q50.2 732.8 52 734.8" fill="none" stroke="#222" stroke-width="1"/>
</svg><svg style="left:0;top:0" width="1" height="1"><path d="M1156.5 72 L1160.5 72 L1158.5 74.5Z" fill="#333"/><g fill="#444"><rect x="1161" y="69.5" width="8.5" height="1"/><rect x="1161" y="72" width="8.5" height="1"/><rect x="1161" y="74.5" width="8.5" height="1"/><rect x="1161" y="77" width="8.5" height="1"/></g></svg><svg style="left:0;top:0" width="1" height="1"><g fill="#444">
<path d="M902.5 56 L899 59 L902.5 62Z"/><path d="M906 56 L902.5 59 L906 62Z"/>
<path d="M1162.5 56 L1166 59 L1162.5 62Z"/><path d="M1166 56 L1169.5 59 L1166 62Z"/>
<path d="M1186.5 56 L1190 59 L1186.5 62Z"/><path d="M1190 56 L1193.5 59 L1190 62Z"/>
</g></svg><svg style="left:0;top:0" width="1" height="1">
<rect x="929.9" y="93.1" width="33.6" height="35.7" fill="#f2f2f2"/>
<rect x="930" y="95.8" width="33.5" height="5.4" fill="#e6e6e6"/><rect x="930" y="101.2" width="33.5" height="0.8" fill="#c8c8c8"/>
<rect x="930" y="122.5" width="33.5" height="0.8" fill="#c0c0c0"/><rect x="930" y="123.3" width="33.5" height="4.3" fill="#e8e8e8"/>
<g fill="#c2c2c2"><rect x="935.8" y="102" width="0.9" height="20.5"/><rect x="951.8" y="102" width="0.9" height="20.5"/><rect x="958.2" y="102" width="0.9" height="20.5"/></g>
<rect x="943.1" y="102" width="8.4" height="20.5" fill="#6c6c6c"/><rect x="948.8" y="102" width="1.2" height="20.5" fill="#3a3a3a"/>
<g fill="#c4c4c4"><circle cx="932.9" cy="118.6" r="2.1"/><circle cx="939.8" cy="118.6" r="2.1"/><circle cx="954.8" cy="118.6" r="2.1"/><circle cx="962" cy="118.6" r="2.1"/></g>
<circle cx="947.4" cy="118.6" r="2.1" fill="#f4f4f4"/>
<rect x="930" y="119" width="0.9" height="0.1" fill="#f2f2f2"/><rect x="963.5" y="93" width="1" height="36" fill="#d8d8d8"/>
<rect x="947.3" y="95" width="1.2" height="33" fill="#8a8a8a"/>
<rect x="929.9" y="94.6" width="33.6" height="1.3" fill="#1a1a1a"/><rect x="929.9" y="94.6" width="1.25" height="33" fill="#1a1a1a"/>
<circle cx="1158.5" cy="97.4" r="5.6" fill="#fff" stroke="#222" stroke-width="1.2"/><path d="M1156 100 L1161 95 M1157.5 95 L1161 95 L1161 98.5" fill="none" stroke="#222" stroke-width="1.5"/>
</svg><div class="t" style="left:980.6px;top:98.4px;font-size:11px;font-weight:normal;color:#1e1e1e;letter-spacing:-0.37px;"><span class="bl">Frame</span></div><div class="a" style="left:912px;top:141px;width:261px;height:1.2px;background:#a8a8a8"></div><div class="a" style="left:912px;top:142.2px;width:261px;height:15px;background:#cdcdcd"></div><div class="a" style="left:912px;top:215.7px;width:261px;height:15.5px;background:#cdcdcd"></div><div class="a" style="left:912px;top:214.5px;width:261px;height:1.2px;background:#bcbcbc"></div><svg style="left:0;top:0" width="1" height="1"><g fill="none" stroke="#555" stroke-width="1">
<path d="M916.8 147.8 L925.8 147.8 L921.3 153.2Z"/><path d="M916.8 221.8 L925.8 221.8 L921.3 227.2Z"/></g></svg><div class="t" style="left:931.4px;top:149.6px;font-size:10.4px;font-weight:bold;color:#222;letter-spacing:0.00px;-webkit-text-stroke-width:0;transform:scaleX(0.855);transform-origin:0 0"><span class="bl">LABEL</span></div><div class="t" style="left:930.9px;top:223.7px;font-size:10.4px;font-weight:bold;color:#222;letter-spacing:0.00px;-webkit-text-stroke-width:0;transform:scaleX(0.855);transform-origin:0 0"><span class="bl">SOUND</span></div><div class="t" style="left:942.0px;top:173.7px;font-size:10.6px;font-weight:normal;color:#1e1e1e;letter-spacing:0.12px;"><span class="bl">Name:</span></div><div class="a" style="left:979.5px;top:164.8px;width:164.5px;height:16.5px;background:#fff;border:1px solid #8a8a8a;box-shadow:inset 0 1px 0 #d8d8d8"></div><div class="t" style="left:947.0px;top:197.8px;font-size:10.6px;font-weight:normal;color:#1e1e1e;letter-spacing:0.19px;"><span class="bl">Type:</span></div><div class="a" style="left:979.5px;top:189.3px;width:164.5px;height:16.299999999999983px;background:linear-gradient(#ececec,#d6d6d6);border:1px solid #b0b0b0;border-radius:2px"></div><div class="a" style="left:1126.5px;top:192.3px;width:1px;height:10.299999999999983px;background:#8a8a8a"></div><svg style="left:0;top:0" width="1" height="1"><path d="M1132 195.64999999999998 L1139 195.64999999999998 L1135.5 199.45Z" fill="#777"/></svg><div class="t" style="left:986.3px;top:197.8px;font-size:10.6px;font-weight:normal;color:#8a8a8a;letter-spacing:0.00px;"><span class="bl">Name</span></div><div class="t" style="left:944.0px;top:247.3px;font-size:10.6px;font-weight:normal;color:#1e1e1e;letter-spacing:0.10px;"><span class="bl">Name:</span></div><div class="a" style="left:981.8px;top:239.2px;width:162.0px;height:16.0px;background:linear-gradient(#ececec,#d6d6d6);border:1px solid #8a8a8a;border-radius:2px"></div><div class="a" style="left:1126.3px;top:242.2px;width:1px;height:10.0px;background:#555"></div><svg style="left:0;top:0" width="1" height="1"><path d="M1131.8 245.39999999999998 L1138.8 245.39999999999998 L1135.3 249.2Z" fill="#111"/></svg><div class="t" style="left:988.6px;top:247.5px;font-size:10.6px;font-weight:normal;color:#1a1a1a;letter-spacing:0.00px;"><span class="bl">None</span></div><div class="a" style="left:912px;top:259px;width:261px;height:1.1px;background:#bdbdbd"></div><div class="t" style="left:945.0px;top:272.1px;font-size:10.6px;font-weight:normal;color:#1e1e1e;letter-spacing:0.13px;"><span class="bl">Effect:</span></div><div class="a" style="left:981.8px;top:263.2px;width:133.60000000000014px;height:15.600000000000023px;background:linear-gradient(#ececec,#d6d6d6);border:1px solid #b0b0b0;border-radius:2px"></div><div class="a" style="left:1097.9px;top:266.2px;width:1px;height:9.600000000000023px;background:#8a8a8a"></div><svg style="left:0;top:0" width="1" height="1"><path d="M1103.4 269.2 L1110.4 269.2 L1106.9 273.0Z" fill="#777"/></svg><div class="t" style="left:988.6px;top:271.3px;font-size:10.6px;font-weight:normal;color:#8a8a8a;letter-spacing:0.00px;"><span class="bl">None</span></div><svg style="left:0;top:0" width="1" height="1"><path d="M1126.5 276.5 L1128 272 L1136 264.5 L1139 267.5 L1131 275 Z" fill="#e6e6e6" stroke="#8a8a8a" stroke-width="1"/><path d="M1134.5 266 L1137.5 269" stroke="#8a8a8a" stroke-width="0.8"/></svg><div class="a" style="left:912px;top:285.2px;width:261px;height:1.1px;background:#bdbdbd"></div><div class="t" style="left:949.7px;top:300.1px;font-size:10.6px;font-weight:normal;color:#1e1e1e;letter-spacing:-0.15px;"><span class="bl">Sync:</span></div><div class="a" style="left:981.8px;top:290.7px;width:162.0px;height:16.30000000000001px;background:linear-gradient(#ececec,#d6d6d6);border:1px solid #b0b0b0;border-radius:2px"></div><div class="a" style="left:1126.3px;top:293.7px;width:1px;height:10.300000000000011px;background:#8a8a8a"></div><svg style="left:0;top:0" width="1" height="1"><path d="M1131.8 297.05 L1138.8 297.05 L1135.3 300.85Z" fill="#777"/></svg><div class="t" style="left:988.6px;top:299.2px;font-size:10.6px;font-weight:normal;color:#8a8a8a;letter-spacing:0.00px;"><span class="bl">Event</span></div><div class="a" style="left:981.8px;top:312.5px;width:112.90000000000009px;height:16.0px;background:linear-gradient(#ececec,#d6d6d6);border:1px solid #b0b0b0;border-radius:2px"></div><div class="a" style="left:1077.2px;top:315.5px;width:1px;height:10.0px;background:#8a8a8a"></div><svg style="left:0;top:0" width="1" height="1"><path d="M1082.7 318.7 L1089.7 318.7 L1086.2 322.5Z" fill="#777"/></svg><div class="t" style="left:988.6px;top:320.8px;font-size:10.6px;font-weight:normal;color:#8a8a8a;letter-spacing:0.00px;"><span class="bl">Repeat</span></div><div class="t" style="left:1104.0px;top:321.3px;font-size:10.6px;font-weight:normal;color:#1e1e1e;letter-spacing:0.00px;"><span class="bl">x</span></div><div class="t" style="left:1118.5px;top:321.3px;font-size:10.6px;font-weight:normal;color:#555;letter-spacing:0.00px;"><span class="bl">1</span></div><div class="a" style="left:1117.5px;top:327.5px;width:7px;height:1px;background-image:linear-gradient(90deg,#555 50%,transparent 50%);background-size:2px 1px"></div><div class="a" style="left:912px;top:335.6px;width:261px;height:1.1px;background:#bdbdbd"></div><div class="t" style="left:980.6px;top:346.6px;font-size:10.6px;font-weight:normal;color:#1e1e1e;letter-spacing:0.25px;"><span class="bl">No sound selected</span></div><div class="a" style="left:883px;top:69.5px;width:18px;height:3px;background-image:linear-gradient(90deg,#888 1px,transparent 1px);background-size:2px 3px"></div><div class="a" style="left:883px;top:133.8px;width:18px;height:3px;background-image:linear-gradient(90deg,#888 1px,transparent 1px);background-size:2px 3px"></div><div class="a" style="left:883px;top:225.2px;width:18px;height:3px;background-image:linear-gradient(90deg,#888 1px,transparent 1px);background-size:2px 3px"></div><div class="a" style="left:883px;top:316px;width:18px;height:3px;background-image:linear-gradient(90deg,#888 1px,transparent 1px);background-size:2px 3px"></div><div class="a" style="left:875px;top:128.3px;width:34px;height:1.6px;background:#a0a0a0"></div><div class="a" style="left:875px;top:129.9px;width:34px;height:1px;background:#f0f0f0"></div><div class="a" style="left:875px;top:219.3px;width:34px;height:1.6px;background:#a0a0a0"></div><div class="a" style="left:875px;top:220.9px;width:34px;height:1px;background:#f0f0f0"></div><div class="a" style="left:875px;top:310.3px;width:34px;height:1.6px;background:#a0a0a0"></div><div class="a" style="left:875px;top:311.9px;width:34px;height:1px;background:#f0f0f0"></div><div class="a" style="left:875px;top:348.8px;width:34px;height:1.6px;background:#a0a0a0"></div><div class="a" style="left:875px;top:350.4px;width:34px;height:1px;background:#f0f0f0"></div><svg style="left:0;top:0" width="1" height="1">
<defs><radialGradient id="gb" cx="40%" cy="30%" r="70%"><stop offset="0" stop-color="#9a9a9a"/><stop offset="1" stop-color="#1e1e1e"/></radialGradient></defs>
<path d="M885.8 90.8 Q884.5 86 889 82.6 Q894 79.6 899.8 80.4 Q903.6 81.4 901.8 84.6 Q899.4 86.2 899.6 87.6 Q901.8 89.4 899.2 91.6 Q894.6 95 889.4 94.6 Q886.4 94.2 885.8 90.8Z" fill="url(#gb)"/>
<g fill="#f4f4f4"><circle cx="888.3" cy="87.6" r="1.35"/><circle cx="891.8" cy="84.1" r="1.3"/><circle cx="896.3" cy="82.8" r="1.25"/><circle cx="889.3" cy="91.4" r="1.3"/><circle cx="894" cy="91.7" r="1.3"/></g>
<rect x="885" y="107.5" width="15.5" height="13" fill="#222"/>
<g fill="#777"><rect x="886.5" y="109" width="2.5" height="2.5"/><rect x="890" y="109" width="2.5" height="2.5"/><rect x="886.5" y="112.5" width="2.5" height="2.5"/><rect x="890" y="116" width="2.5" height="2.5"/></g>
<g fill="#ccc"><rect x="893.5" y="109" width="2.5" height="2.5"/><rect x="893.5" y="112.5" width="2.5" height="2.5"/><rect x="890" y="112.5" width="2.5" height="2.5"/><rect x="886.5" y="116" width="2.5" height="2.5"/></g>
<g fill="#fff"><rect x="897" y="109" width="2.5" height="2.5"/><rect x="897" y="112.5" width="2.5" height="2.5"/><rect x="893.5" y="116" width="2.5" height="2.5"/><rect x="897" y="116" width="2.5" height="2.5"/></g>
<rect x="887" y="145" width="1.3" height="14" fill="#111"/><rect x="889" y="146.5" width="6.5" height="5" fill="#8a8a8a"/><rect x="889" y="153" width="11" height="5" fill="#1e1e1e"/>
<circle cx="892.5" cy="179.5" r="7.5" fill="url(#gb)"/><rect x="891.4" y="177.5" width="2.4" height="6" fill="#fff"/><rect x="890.3" y="182.5" width="4.8" height="1.3" fill="#fff"/><rect x="890.3" y="177.5" width="3.2" height="1" fill="#fff"/><circle cx="892.6" cy="175" r="1.3" fill="#fff"/>
<rect x="887.5" y="199" width="11" height="11" fill="#fff" stroke="#222" stroke-width="1.6" stroke-dasharray="2 1.2"/><g fill="#111"><rect x="885.8" y="197.5" width="3" height="3"/><rect x="897.2" y="197.5" width="3" height="3"/><rect x="885.8" y="208.5" width="3" height="3"/><rect x="897.2" y="208.5" width="3" height="3"/></g>
<rect x="889.2" y="234.8" width="11.3" height="13.5" fill="#f4f4f4" stroke="#2a2a2a" stroke-width="1.2"/><g fill="#444"><rect x="891.2" y="237" width="7.3" height="1.1"/><rect x="891.2" y="239.6" width="7.3" height="1.1"/><rect x="891.2" y="242.2" width="7.3" height="1.1"/><rect x="891.2" y="244.8" width="7.3" height="1.1"/></g>
<rect x="883.5" y="241" width="12.5" height="10" fill="#dadada"/>
<path d="M887.3 241.8 Q885.4 241.8 885.6 244 Q885.8 246 884.2 246.2 Q885.8 246.4 885.6 248.4 Q885.4 250.6 887.3 250.6" fill="none" stroke="#111" stroke-width="1.4"/>
<path d="M891 241.8 Q892.9 241.8 892.7 244 Q892.5 246 894.1 246.2 Q892.5 246.4 892.7 248.4 Q892.9 250.6 891 250.6" fill="none" stroke="#111" stroke-width="1.4"/>
<path d="M895.5 248.5 L900.5 248.5 L900.5 243" fill="none" stroke="#2a2a2a" stroke-width="1.2"/>
<g stroke="#1a1a1a" stroke-width="0.8">
<path d="M888.8 263.2 L892.6 261 L896.4 263.2 L896.4 268.6 L892.6 270.8 L888.8 268.6Z" fill="#e8e8e8"/>
<path d="M884.9 270 L889 267.7 L893.2 270 L893.2 275 L889 277.3 L884.9 275Z" fill="#f0f0f0"/>
<path d="M892.6 270 L896.7 267.7 L900.9 270 L900.9 275 L896.7 277.3 L892.6 275Z" fill="#f4f4f4"/></g>
<path d="M888.8 263.2 L892.6 265.4 L892.6 270.8 L888.8 268.6Z" fill="#3a3a3a"/>
<path d="M884.9 270 L889 272.3 L889 277.3 L884.9 275Z" fill="#2a2a2a"/>
<path d="M892.6 270 L896.7 272.3 L896.7 277.3 L892.6 275Z" fill="#2a2a2a"/>
<circle cx="888.5" cy="300" r="3.4" fill="#555"/><circle cx="895" cy="294.5" r="2.5" fill="#888" stroke="#555" stroke-width="0.6"/><circle cx="898.5" cy="288.8" r="1.7" fill="#ddd" stroke="#777" stroke-width="0.7"/>
<path d="M883.5 324.5 L888.5 324.5 L886 327Z" fill="#333"/>
<path d="M889 327 L893.5 327 L895 328.5 L899.5 328.5 L899.5 336.5 L889 336.5Z" fill="#f0f0f0" stroke="#444" stroke-width="0.9"/>
<g fill="#222"><rect x="889.5" y="338" width="2.8" height="3"/><rect x="893.2" y="338" width="2.8" height="3"/><rect x="896.9" y="338" width="2.8" height="3"/></g>
<g fill="#fff"><rect x="890.4" y="339.1" width="1" height="0.8"/><rect x="894.1" y="339.1" width="1" height="0.8"/><rect x="897.8" y="339.1" width="1" height="0.8"/></g>
</svg><div class="a" style="left:1176px;top:192.20000000000002px;width:22px;height:1px;background:#b0b0b0"></div><div class="a" style="left:1176px;top:193.20000000000002px;width:22px;height:1px;background:#f2f2f2"></div><div class="a" style="left:1176px;top:347.9px;width:22px;height:1px;background:#b0b0b0"></div><div class="a" style="left:1176px;top:348.9px;width:22px;height:1px;background:#f2f2f2"></div><div class="a" style="left:1176px;top:437.4px;width:22px;height:1px;background:#b0b0b0"></div><div class="a" style="left:1176px;top:438.4px;width:22px;height:1px;background:#f2f2f2"></div><div class="a" style="left:1176px;top:486.7px;width:22px;height:1px;background:#b0b0b0"></div><div class="a" style="left:1176px;top:487.7px;width:22px;height:1px;background:#f2f2f2"></div><div class="a" style="left:1176px;top:604.6999999999999px;width:22px;height:1px;background:#b0b0b0"></div><div class="a" style="left:1176px;top:605.6999999999999px;width:22px;height:1px;background:#f2f2f2"></div><div class="a" style="left:1177.3px;top:86.4px;width:19.5px;height:17.3px;background:#a9a9a9;border:1px solid #7e7e7e"></div><div class="a" style="left:1177.3px;top:613.3px;width:18.7px;height:17.4px;background:#a4a4a4;border:1px solid #7a7a7a"></div><svg style="left:0;top:0" width="1" height="1">
<defs><linearGradient id="tg" x1="0" y1="0" x2="1" y2="1"><stop offset="0" stop-color="#fff"/><stop offset="1" stop-color="#a8a8a8"/></linearGradient></defs>
<path d="M1182.6 88.8 L1182.6 99 L1185 96.8 L1187.3 101 L1189 100.2 L1186.8 96 L1190.2 95.8Z" fill="#111"/>
<path d="M1182.6 110.4 L1182.6 120.6 L1185 118.4 L1187.3 122.6 L1189 121.8 L1186.8 117.6 L1190.2 117.4Z" fill="#fff" stroke="#111" stroke-width="1"/>
<path d="M1186.5 119 L1188.6 122.6 L1190 121.6 L1187.9 118Z" fill="#111"/>
<defs><linearGradient id="ftg" x1="0" y1="0" x2="1" y2="1"><stop offset="0" stop-color="#888"/><stop offset="0.6" stop-color="#111"/></linearGradient></defs>
<path d="M1179.3 132.3 L1187.6 139.8 L1183.6 140.2 L1179.3 144.5Z" fill="url(#ftg)"/>
<g fill="#111"><rect x="1183" y="132.2" width="1.7" height="1.7"/><rect x="1188" y="132.2" width="1.7" height="1.7"/><rect x="1192.8" y="132.2" width="1.7" height="1.7"/><rect x="1192.8" y="137" width="1.7" height="1.7"/><rect x="1183" y="141.6" width="1.7" height="1.7"/><rect x="1188" y="141.6" width="1.7" height="1.7"/><rect x="1192.8" y="141.6" width="1.7" height="1.7"/></g>
<path d="M1193.3 146.2 L1196 143.5 L1196 146.2Z" fill="#111"/>
<defs><radialGradient id="sph" cx="35%" cy="30%" r="75%"><stop offset="0" stop-color="#fff"/><stop offset="0.5" stop-color="#c8c8c8"/><stop offset="1" stop-color="#4a4a4a"/></radialGradient></defs>
<circle cx="1186.3" cy="158.6" r="6.1" fill="url(#sph)" stroke="#555" stroke-width="0.6"/>
<ellipse cx="1187.3" cy="159.8" rx="7.8" ry="4.2" transform="rotate(-50 1187.3 159.8)" fill="none" stroke="#222" stroke-width="1.2" stroke-dasharray="0 6 30"/>
<path d="M1193.5 167.8 L1196 165.3 L1196 167.8Z" fill="#111"/>
<ellipse cx="1187.8" cy="177.6" rx="7.4" ry="4.1" transform="rotate(-14 1187.8 177.6)" fill="none" stroke="#333" stroke-width="1.1"/>
<path d="M1181.5 180.5 Q1179.3 182.5 1181.5 184 Q1183.5 185 1181.3 187.5" fill="none" stroke="#333" stroke-width="1"/>
<path d="M1186.5 197.5 L1190.5 206 L1188.8 210 L1184.2 210 L1182.5 206Z" fill="#fff" stroke="#111" stroke-width="1.2"/>
<path d="M1186.5 199 L1186.5 205" stroke="#111" stroke-width="0.9"/><rect x="1183.5" y="210.5" width="6" height="2.8" fill="#111"/>
<path d="M1193 214 L1195.5 211.5 L1195.5 214Z" fill="#111"/>
</svg><div class="t" style="left:1180.6px;top:227.9px;font-size:18.2px;font-weight:normal;color:#111;letter-spacing:0.00px;font-family:'Liberation Serif',serif"><span class="bl">T</span></div><svg style="left:0;top:0" width="1" height="1">
<path d="M1180.8 243.5 L1192.8 255" stroke="#222" stroke-width="1.6"/>
<rect x="1181" y="265" width="11.5" height="10" fill="url(#tg)" stroke="#333" stroke-width="1.3"/>
<path d="M1193 278 L1195.5 275.5 L1195.5 278Z" fill="#111"/>
<path d="M1179 299.8 L1181 295 L1190.6 286.6 Q1192.6 286.2 1193.6 288.4 L1184.2 297.6Z" fill="#fafafa" stroke="#1a1a1a" stroke-width="1.1" stroke-linejoin="round"/>
<path d="M1179.2 299.6 L1184.2 297.6 L1193.6 288.4" fill="none" stroke="#111" stroke-width="1.6"/><path d="M1179 299.8 L1180.2 297 L1181.8 298.4Z" fill="#111"/>
<path d="M1186.3 316.3 L1195.6 307.6" stroke="#2a2a2a" stroke-width="1.4"/>
<ellipse cx="1184" cy="318" rx="4.3" ry="2.2" transform="rotate(-38 1184 318)" fill="url(#tg)" stroke="#1a1a1a" stroke-width="1"/>
<path d="M1180 320.8 L1182 319.6" stroke="#111" stroke-width="1.3"/>
<path d="M1193.5 322 L1196 319.5 L1196 322Z" fill="#111"/>
<path d="M1181.8 341.2 L1183.3 337.3 L1192 329.4 Q1194.2 329 1195 331.2 L1186 339.6Z" fill="#fafafa" stroke="#1a1a1a" stroke-width="1.1" stroke-linejoin="round"/>
<path d="M1182 341 L1186 339.6 L1195 331.2" fill="none" stroke="#111" stroke-width="1.5"/>
<g fill="#1a1a1a"><circle cx="1178.3" cy="336.8" r="0.85"/><circle cx="1179" cy="333.2" r="0.85"/><circle cx="1180.8" cy="330.6" r="0.85"/><circle cx="1183.5" cy="329" r="0.85"/><circle cx="1186.5" cy="328.7" r="0.85"/><circle cx="1180" cy="339.8" r="0.85"/><circle cx="1181.8" cy="335.3" r="0.85"/><circle cx="1184.3" cy="332.3" r="0.85"/><circle cx="1187.3" cy="331.3" r="0.7"/></g>
<g fill="#222"><path d="M1181 361.8 L1190.3 355.6" stroke="#222" stroke-width="3.8"/><circle cx="1179.9" cy="361.2" r="2.1"/><circle cx="1181.9" cy="363.7" r="2.1"/><circle cx="1189.4" cy="354.3" r="2.1"/><circle cx="1191.7" cy="356.9" r="2.1"/></g>
<g fill="#fff"><path d="M1181 361.3 L1190 355.3" stroke="#fff" stroke-width="2"/><circle cx="1179.6" cy="360.8" r="1.25"/><circle cx="1181.6" cy="363.1" r="1.1"/><circle cx="1189.2" cy="353.9" r="1.2"/><circle cx="1191.2" cy="356.3" r="1.1"/></g>
<path d="M1193.5 368.5 L1196 366 L1196 368.5Z" fill="#111"/>
<path d="M1177.8 384 L1184.6 376.3 L1192.3 383.8 L1185.3 390.3Z" fill="url(#tg)" stroke="#111" stroke-width="1.5"/>
<path d="M1182.8 378.5 Q1182.8 374.6 1186.2 375.2 Q1188.6 376.4 1187.6 380" fill="none" stroke="#111" stroke-width="1.2"/>
<path d="M1191.3 383.2 L1193.8 385 L1193.8 389.5 L1191.6 388.3Z" fill="#111"/>
<path d="M1193.5 391.5 L1196 389 L1196 391.5Z" fill="#111"/>
<path d="M1181 411 L1181.5 408.5 L1188 402 L1190 404 L1183.5 410.5Z" fill="#eee" stroke="#222" stroke-width="1"/>
<path d="M1187.5 400.5 L1191.5 396.5 L1193 398 L1189 402Z" fill="#222" stroke="#222" stroke-width="1.3"/>
<path d="M1179.5 429.5 L1186 421.5 L1193 421.5 L1186.5 429.5Z" fill="#f4f4f4" stroke="#222" stroke-width="1.2"/>
<path d="M1179.5 429.5 L1179.5 431 L1186.5 431 L1193 423" fill="none" stroke="#222" stroke-width="1"/>
<path d="M1181 451 L1180 446.5 Q1179.5 445 1181 445.5 L1182.5 448 L1182.5 444 Q1183 443 1184.5 444 L1185 447 L1185.5 443.5 Q1186.5 442.8 1187.5 443.8 L1187.5 447.5 L1188.5 444.5 Q1189.8 444 1190.3 445.5 L1190 450 L1192.5 448.5 Q1194 448.5 1193.5 450 L1189.5 456 Q1187.5 458.5 1185 458.3 Q1182 458 1181 451Z" fill="#fff" stroke="#222" stroke-width="1.1"/>
<circle cx="1184.3" cy="471" r="4.3" fill="url(#tg)" stroke="#222" stroke-width="1.3"/>
<path d="M1187.5 474.5 L1192.5 479.5" stroke="#111" stroke-width="2.2"/>
<path d="M1181.2 505.2 L1182.4 502 L1190.6 494.4 Q1192.4 494.2 1192.9 496.2 L1184.5 504Z" fill="#fafafa" stroke="#1a1a1a" stroke-width="1"/>
<path d="M1181.2 505.2 L1184.5 504 L1192.9 496.2" fill="none" stroke="#111" stroke-width="1.3"/>
<rect x="1178.5" y="511.8" width="17.5" height="13.5" fill="#e2e2e2" stroke="#4a4a4a" stroke-width="1.1"/>
<path d="M1179.3 539.3 L1185 533.5 L1191.2 539.3 L1185.6 544.9Z" fill="url(#tg)" stroke="#111" stroke-width="1.4"/>
<path d="M1183.2 535.3 Q1183.3 532.2 1186.2 532.7 Q1188.2 533.8 1187.4 536.8" fill="none" stroke="#111" stroke-width="1.1"/>
<path d="M1190.4 538.6 L1192.6 540.2 L1192.6 544.6 L1190.6 543.5Z" fill="#111"/>
<rect x="1178.5" y="550.7" width="17.5" height="14" fill="#e8901e" stroke="#4a4a4a" stroke-width="1.1"/>
<rect x="1183.5" y="575.5" width="5.5" height="5.5" fill="#fff" stroke="#222" stroke-width="0.9"/><rect x="1180" y="572" width="6" height="6" fill="#111"/>
<rect x="1180" y="587" width="4.8" height="4.8" fill="#111"/><rect x="1180.5" y="593.5" width="4.3" height="4.3" fill="#fff" stroke="#222" stroke-width="0.9"/>
<path d="M1187 588.5 Q1192.5 588.5 1192.5 592.8 Q1192.5 597 1187.5 597" fill="none" stroke="#222" stroke-width="1.3"/><path d="M1186 586.5 L1189 588.5 L1186 590.5Z" fill="#222"/><path d="M1189 595 L1186 597 L1189 599Z" fill="#222"/>
<path d="M1181.5 627 L1181.5 621 Q1181.5 615.5 1186.8 615.5 Q1192 615.5 1192 621 L1192 627" fill="none" stroke="#222" stroke-width="2"/>
<path d="M1184 627 L1184 621.5 Q1184 618.3 1186.8 618.3 Q1189.5 618.3 1189.5 621.5 L1189.5 627" fill="none" stroke="#e8e8e8" stroke-width="0.8"/>
<g fill="#222"><rect x="1180.5" y="628" width="1" height="1"/><rect x="1182.5" y="628" width="1" height="1"/><rect x="1190.5" y="628" width="1" height="1"/><rect x="1192.5" y="628" width="1" height="1"/></g>
<path d="M1178.5 642.3 L1185.5 642.3" stroke="#333" stroke-width="1"/><path d="M1184 640.3 L1186.5 642.3 L1184 644.3Z" fill="#333"/>
<path d="M1191 635 Q1186 635.5 1187.5 640 Q1190 643 1191 646.5 Q1191.5 650 1187.5 650.5" fill="none" stroke="#333" stroke-width="1.5"/>
<path d="M1178.5 660.8 L1185.5 660.8" stroke="#333" stroke-width="1"/><path d="M1184 658.8 L1186.5 660.8 L1184 662.8Z" fill="#333"/>
<path d="M1192.5 653 L1187.5 661 L1192.5 671" fill="none" stroke="#333" stroke-width="1.5"/>
</svg><svg style="left:0;top:0" width="1" height="1">
<defs><linearGradient id="ap" x1="0" y1="0" x2="0" y2="1"><stop offset="0" stop-color="#1a1a1a"/><stop offset="0.45" stop-color="#2a2a24"/><stop offset="1" stop-color="#8a8a84"/></linearGradient></defs>
<g transform="translate(18.6 0.6)"><path d="M11.6 4.4 C10.2 4.4 9.4 5.1 8.2 5.1 C7 5.1 6 4.4 4.8 4.4 C2.6 4.4 0.4 6.3 0.4 9.8 C0.4 13.3 2.9 17.3 4.8 17.3 C5.8 17.3 6.5 16.7 7.9 16.7 C9.4 16.7 10 17.3 11.2 17.3 C12.5 17.3 13.7 15.3 14.3 13.6 C12.6 12.8 11.8 11.5 11.8 9.9 C11.8 8.3 12.8 7.2 13.8 6.5 C13.1 5.2 12.1 4.4 11.6 4.4Z M8.3 4.3 C8.3 2.9 9.5 1.2 11 0.8 C11.2 2.3 10 4 8.3 4.3Z" fill="url(#ap)"/></g>
<g fill="none" stroke="#7a7a7a" stroke-width="1.5"><path d="M778.2 12.5 A6.2 6.2 0 1 0 777.6 7.5"/><path d="M783.8 5.5 L783.8 9.8 L786.8 12.3" stroke-width="1.2"/></g>
<path d="M774.5 6.8 L780 6.8 L777.3 10.5Z" fill="#7a7a7a"/>
<path d="M808 6.8 L815 13 L811.5 16 L811.5 3.4 L815 6.5 L808 12.8" fill="none" stroke="#1a1a1a" stroke-width="1.1"/>
<g fill="none" stroke="#111" stroke-width="2" stroke-linecap="round"><path d="M831.2 7.4 A12.9 12.9 0 0 1 849.4 7.4"/><path d="M834.3 10.5 A8.5 8.5 0 0 1 846.3 10.5"/><path d="M837.3 13.5 A4.2 4.2 0 0 1 843.3 13.5"/></g><circle cx="840.3" cy="16.6" r="1.3" fill="#111"/>
<path d="M859.6 8 L862 8 L866.3 5 L866.3 15.4 L862 12.4 L859.6 12.4Z" fill="#111"/>
<path d="M889.5 5.3 L905 5.3 Q904 10.3 905 15.2 L889.5 15.2 Q887.8 10.3 889.5 5.3Z" fill="#fff" stroke="#111" stroke-width="1.2"/>
<path d="M906.2 8.3 Q907.8 10.3 906.2 12.2Z" fill="#111" stroke="#111" stroke-width="1"/>
<path d="M891.5 12 L894.5 9 L896.5 11.5 L899.5 8 L901.5 9.3" fill="none" stroke="#111" stroke-width="1.3"/>
<circle cx="1172.5" cy="8.2" r="4.3" fill="none" stroke="#111" stroke-width="1.8"/><path d="M1175.6 11.3 L1179.8 15.3" stroke="#111" stroke-width="2.3" stroke-linecap="round"/>
<path d="M998.7 36 L1003.3 36 L1001 39Z" fill="#333"/>
<circle cx="1033.7" cy="36.5" r="3.9" fill="none" stroke="#222" stroke-width="1.3"/><path d="M1031 39.3 L1027.3 43.3" stroke="#222" stroke-width="1.6"/>
<path d="M9 61.5 L14.5 66.5 M14.5 61.5 L9 66.5" stroke="#333" stroke-width="1.3"/>
<path d="M19.7 83.6 L10 83.6 M12.5 79.6 L8.5 83.6 L12.5 87.6" fill="none" stroke="#c6c6c6" stroke-width="2.6"/>
</svg><svg style="left:0;top:0" width="1" height="1"><g transform="translate(29.7 77)">
<rect x="0.5" y="6" width="13" height="8.6" fill="#8a8ad8" stroke="#6060b0" stroke-width="0.9"/>
<rect x="1.5" y="10.3" width="11" height="3.3" fill="#fff"/><g fill="#fff"><rect x="2" y="7.5" width="2" height="1"/><rect x="5.5" y="7.5" width="2" height="1"/><rect x="9" y="7.5" width="2" height="1"/></g>
<path d="M0.6 5.4 L12 0.5 L12.8 2.2 L1.3 7Z" fill="#d8c800" stroke="#6a6000" stroke-width="0.7"/>
</g></svg><svg style="left:0;top:0" width="1" height="1"><g transform="translate(727 76)">
<rect x="0.5" y="6" width="13" height="8.6" fill="#8a8ad8" stroke="#6060b0" stroke-width="0.9"/>
<rect x="1.5" y="10.3" width="11" height="3.3" fill="#fff"/><g fill="#fff"><rect x="2" y="7.5" width="2" height="1"/><rect x="5.5" y="7.5" width="2" height="1"/><rect x="9" y="7.5" width="2" height="1"/></g>
<path d="M0.6 5.4 L12 0.5 L12.8 2.2 L1.3 7Z" fill="#d8c800" stroke="#6a6000" stroke-width="0.7"/>
</g></svg><svg style="left:0;top:0" width="1" height="1">
<path d="M751 84.5 L757.5 77 L760 77 L760 86.5 L752 86.5Z" fill="#5ad0a0" stroke="#2a7a5a" stroke-width="0.8"/>
<rect x="757.5" y="79.5" width="8.5" height="8.5" fill="#e8e040" stroke="#7a7000" stroke-width="0.8"/>
<circle cx="758" cy="86.8" r="3.7" fill="#ee5522" stroke="#a03010" stroke-width="0.7"/>
<path d="M855 82 L858 79 L861 82Z M855 84.5 L858 87.5 L861 84.5Z" fill="#333"/>
</svg><svg style="left:0;top:0" width="1" height="1">
<path d="M114.5 586.2 Q120.3 580.5 126.2 586.2 Q120.3 591.8 114.5 586.2Z" fill="#fff" stroke="#222" stroke-width="1.3"/><circle cx="120.3" cy="586.2" r="2.8" fill="#111"/><circle cx="119.5" cy="585.4" r="0.7" fill="#fff"/>
<path d="M135.5 586 L135.5 584.5 Q135.5 581.8 138.2 581.8 Q140.9 581.8 140.9 584.5 L140.9 586" fill="none" stroke="#222" stroke-width="1.4"/>
<rect x="134" y="585.5" width="8.5" height="5.5" rx="0.8" fill="#333"/><rect x="137.6" y="587" width="1.2" height="2.5" fill="#999"/>
<rect x="152.6" y="581.8" width="9.6" height="9.6" fill="#e8e8e8" stroke="#111" stroke-width="1.6"/>
<path d="M853.5 566 L857.5 566 L855.5 568.5Z" fill="#333"/><g fill="#444"><rect x="858" y="563.3" width="8.5" height="1"/><rect x="858" y="565.8" width="8.5" height="1"/><rect x="858" y="568.3" width="8.5" height="1"/><rect x="858" y="570.8" width="8.5" height="1"/></g>
</svg><svg style="left:0;top:0" width="1" height="1"><g transform="translate(23 602)">
<path d="M0.5 0.5 L8.5 0.5 L8.5 9.5 L3.5 9.5 L3.5 5 L0.5 5Z" fill="#f0f0f0" stroke="#666" stroke-width="0.7"/>
<path d="M7.8 1 L7.8 9.3 L3.8 9.3" fill="none" stroke="#111" stroke-width="1.4"/><path d="M0.8 5 L3.5 5 L3.5 8" fill="none" stroke="#444" stroke-width="0.9"/>
</g></svg><svg style="left:0;top:0" width="1" height="1"><g transform="translate(23 619)">
<path d="M0.5 0.5 L8.5 0.5 L8.5 9.5 L3.5 9.5 L3.5 5 L0.5 5Z" fill="#f0f0f0" stroke="#666" stroke-width="0.7"/>
<path d="M7.8 1 L7.8 9.3 L3.8 9.3" fill="none" stroke="#111" stroke-width="1.4"/><path d="M0.8 5 L3.5 5 L3.5 8" fill="none" stroke="#444" stroke-width="0.9"/>
</g></svg><svg style="left:0;top:0" width="1" height="1"><g transform="translate(23 636)">
<path d="M0.5 0.5 L8.5 0.5 L8.5 9.5 L3.5 9.5 L3.5 5 L0.5 5Z" fill="#f0f0f0" stroke="#666" stroke-width="0.7"/>
<path d="M7.8 1 L7.8 9.3 L3.8 9.3" fill="none" stroke="#111" stroke-width="1.4"/><path d="M0.8 5 L3.5 5 L3.5 8" fill="none" stroke="#444" stroke-width="0.9"/>
</g></svg><svg style="left:0;top:0" width="1" height="1"><path d="M97 611 L98 608 L105.5 600.5 L107.5 602.5 L100 610Z" fill="#fff" stroke="#222" stroke-width="1.1"/><path d="M97 611 L98.5 610.5" stroke="#111" stroke-width="1.3"/></svg><div class="a" style="left:875px;top:742.6px;width:34px;height:1.2px;background:#f6f6f6"></div><div class="a" style="left:912px;top:742.6px;width:261px;height:1.2px;background:#f6f6f6"></div><div class="a" style="left:1175.6px;top:742.6px;width:22.4px;height:1.2px;background:#f6f6f6"></div><div class="a" style="left:1176px;top:80px;width:1px;height:663px;background:#f0f0f0"></div><div class="a" style="left:875px;top:65px;width:1px;height:678px;background:#eaeaea"></div><div class="a" style="left:908px;top:65px;width:1px;height:678px;background:#ebebeb"></div>
</body></html>
